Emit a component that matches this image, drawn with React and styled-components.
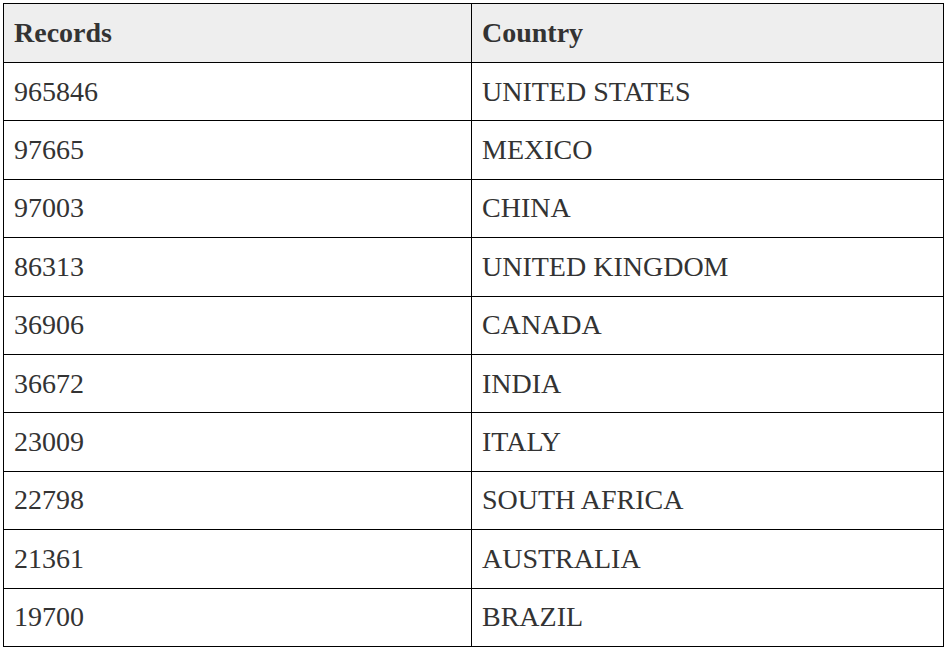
import React from 'react';
import styled, { createGlobalStyle } from 'styled-components';

const GlobalStyle = createGlobalStyle`
  body {
    margin: 3px;
    background: #fff;
    font-family: "Liberation Serif", "Times New Roman", serif;
  }
`;

const Table = styled.table`
  width: 941px;
  border-collapse: collapse;
  border: 1px solid #000;
  color: #333;
  font-size: 28px;
  table-layout: fixed;
`;

const Th = styled.th`
  background-color: #eee;
  border: 1px solid #000;
  text-align: left;
  font-weight: bold;
  padding: 0 10px;
  height: 58px;
  width: ${(p) => p.$w || 'auto'};
`;

const Td = styled.td`
  border: 1px solid #000;
  padding: 0 10px;
  height: 57.4px;
`;

const rows = [
  ['965846', 'UNITED STATES'],
  ['97665', 'MEXICO'],
  ['97003', 'CHINA'],
  ['86313', 'UNITED KINGDOM'],
  ['36906', 'CANADA'],
  ['36672', 'INDIA'],
  ['23009', 'ITALY'],
  ['22798', 'SOUTH AFRICA'],
  ['21361', 'AUSTRALIA'],
  ['19700', 'BRAZIL'],
];

export default function App() {
  return (
    <>
      <GlobalStyle />
      <Table>
        <thead>
          <tr>
            <Th $w="447px">Records</Th>
            <Th>Country</Th>
          </tr>
        </thead>
        <tbody>
          {rows.map(([records, country]) => (
            <tr key={country}>
              <Td>{records}</Td>
              <Td>{country}</Td>
            </tr>
          ))}
        </tbody>
      </Table>
    </>
  );
}
